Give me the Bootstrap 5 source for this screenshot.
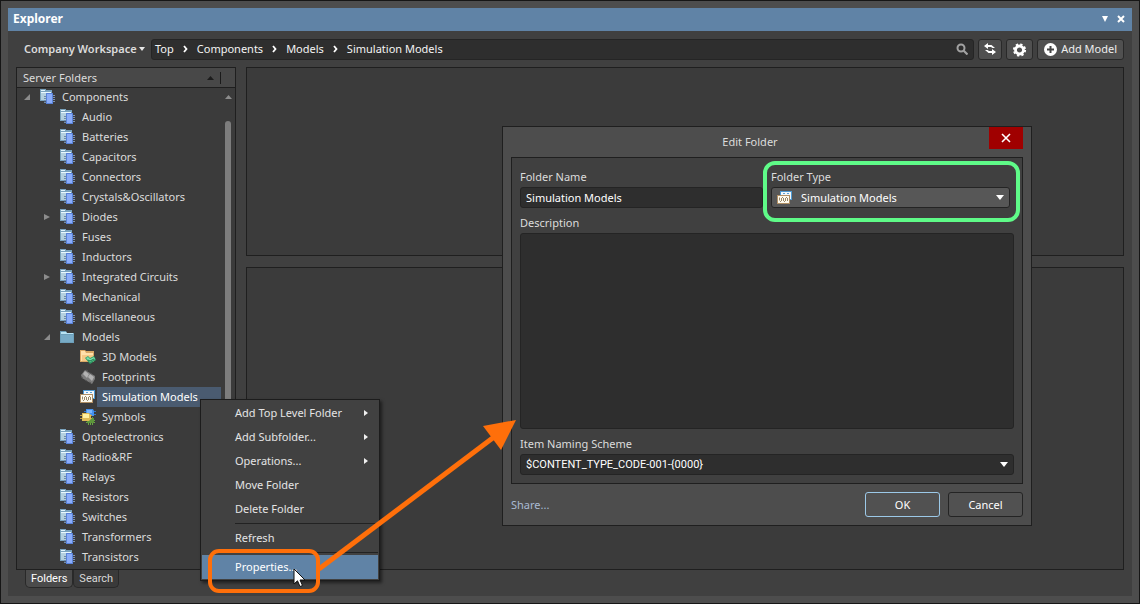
<!DOCTYPE html>
<html lang="en">
<head>
<meta charset="utf-8">
<meta name="viewport" content="width=device-width, initial-scale=1">
<title>Explorer</title>
<link href="https://cdn.jsdelivr.net/npm/bootstrap@5.3.0/dist/css/bootstrap.min.css" rel="stylesheet">
<style>
  :root { --line:#1f1f1f; --pane:#3b3b3b; --chrome:#404040; --frame:#4d4d4d; --accent:#6083a6; --field:#2e2e2e; --ink:#dcdcdc; --mark-orange:#ff6f0a; }
  body { background:var(--frame); color:var(--ink); font:11px/16px "Noto Sans","Open Sans",sans-serif; min-height:100vh; }
  a { color:inherit; text-decoration:none; }
  svg { display:block; flex:none; }
  button, input, select, textarea { font:inherit; color:#fff; }
  .app-frame { min-height:100vh; padding:7px; border:1px solid #161616; }
  .title-strip { height:23px; padding:0 7px 2px 5px; background:var(--accent); color:#fff; }
  .title-strip h1 { font-size:12px; line-height:16px; font-weight:700; margin:0; }
  .bare { background:none; border:0; padding:0; }
  .app-body { background:var(--chrome); padding:8px; }
  .tool-row { height:21px; gap:4px; margin-bottom:7px; }
  .space-btn { width:131px; padding:0 0 2px 8px; gap:2px; font-weight:600; color:var(--ink); }
  .path-box { height:21px; background:var(--field); border:1px solid #252525; border-radius:3px; padding:0 5px 1px 3px; color:#f4f4f4; }
  .path-box ol, .path-box li { gap:9px; }
  .tool-btn { height:21px; padding:0 5px 1px; background:#505050; border:1px solid #292929; border-radius:3px; color:#eee; }
  .tool-btn.wide { padding:0 6px 1px; gap:4px; }
  .tool-btn.gear { padding:0 4px; }
  .pane { background:var(--pane); border:1px solid var(--line); }
  .split { gap:10px; }
  .side { width:220px; }
  .side-head { height:20px; padding:0 14px 0 6px; border-bottom:1px solid var(--line); background:#484848; }
  .col-tick { width:1px; height:12px; background:#1a1a1a; margin-left:6px; }
  .tree, .tree ul { list-style:none; margin:0; padding:0; }
  .tree { margin-top:-1px; }
  .tree ul { padding-left:20px; }
  .tree-row { height:20px; padding-left:7px; }
  .twist { width:8px; height:8px; margin-right:8px; }
  .tree-row a { flex:1; margin-left:1px; padding:2px 0 2px 5px; white-space:nowrap; }
  .tree-row a.picked { background:#4a5b70; color:#fff; }
  .scroller { width:14px; padding-top:7px; }
  .thumb { width:6px; margin:22px 0 60px; border-radius:3px; background:#7d7d7d; }
  .side-tabs { height:18px; padding-left:9px; font:11px/14px Roboto,"Liberation Sans",sans-serif; }
  .side-tab { background:#3a3a3a; border:1px solid #292929; border-top:0; border-radius:0 0 5px 5px; padding:0 5px; color:#d8d8d8; }
  .side-tab.on { background:#4b4b4b; color:#fff; }
  .detail { margin-bottom:18px; gap:11px; }
  .detail .upper { height:189px; }

  .ctx { position:absolute; left:200px; top:399px; width:180px; padding:1px; background:#414141; border:1px solid #1c1c1c; box-shadow:2px 2px 3px rgba(0,0,0,.5); z-index:5; }
  .ctx button { display:flex; align-items:center; justify-content:space-between; width:100%; height:24px; padding:0 10px 0 33px; background:none; border:0; color:#e4e4e4; }
  .ctx button.hot { background:var(--accent); color:#fff; }
  .ctx hr { margin:2px 0 2px 33px; border-top:1px solid #222; opacity:1; }

  .dlg { position:absolute; left:502px; top:126px; width:530px; padding:0 8px 8px; background:var(--frame); border:1px solid var(--line); z-index:4; }
  .dlg-head { height:30px; }
  .dlg-head h2 { flex:1; margin:7px 0 0; text-align:center; font-size:11px; line-height:16px; font-weight:400; }
  .dlg-close { width:34px; height:22px; background:#a00000; border:0; display:grid; place-items:center; }
  .dlg-body { background:var(--chrome); border:1px solid var(--line); padding:11px 8px 8px; }
  .dlg label { display:block; height:16px; margin-bottom:2px; }
  .dlg label.next { margin-top:7px; }
  .fld { display:block; width:100%; height:21px; background-color:var(--field); border:1px solid #242424; border-radius:3px; padding:0 5px 1px; color:#fff; outline:0; appearance:none; }
  textarea.fld { height:196px; resize:none; }
  .drop { padding:1px 5px 0; background-repeat:no-repeat; background-position:right 5px center; background-image:url("data:image/svg+xml,%3Csvg xmlns='http://www.w3.org/2000/svg' width='8' height='5'%3E%3Cpath d='M0 0h8L4 5z' fill='white'/%3E%3C/svg%3E"); }
  .scheme { font-family:Roboto,"Noto Sans",sans-serif; }
  .type-col { width:239px; margin-right:4px; }
  .type-pick { background-color:#575757; padding-left:29px; }
  .type-icon { position:absolute; left:6px; top:3px; pointer-events:none; }
  .dlg-btn { width:75px; height:25px; background:#515151; border:1px solid #242424; border-radius:3px; }
  .dlg-btn.main { border-color:#9cc9e8; }
  .share { color:#a9bad3; }

  .ring { position:absolute; pointer-events:none; border:4px solid; z-index:7; }
  .ring-type { left:763px; top:161px; width:257px; height:61px; border-color:#5ffb88; border-radius:12px; }
  .ring-prop { left:208px; top:549px; width:112px; height:44px; border-color:var(--mark-orange); border-radius:11px; }
  .arrow { position:absolute; left:310px; top:410px; z-index:7; pointer-events:none; }
  .pointer { position:absolute; left:293px; top:568px; z-index:8; pointer-events:none; }
</style>
</head>
<body>
<svg width="0" height="0" class="position-absolute" aria-hidden="true">
  <symbol id="i-comp" viewBox="0 0 16 16">
    <path d="M0 0h6v1h6v11H0z" fill="#7ba3bd"/><path d="M1 1h4v1H1z" fill="#e2f4ff"/><path d="M1 3h10v8H1z" fill="#b4d0df"/><path d="M1 3h10v1H1z" fill="#e8f7ff"/>
    <path d="M4 12h2v2H4z" fill="#46566a"/>
    <path d="M4 7.500h2M4 9.500h2M4 11.500h2M4 13.500h2" stroke="#6f8ba8"/><path d="M13 6.500h2M13 8.500h2M13 10.500h2M13 12.500h2" stroke="#7d92b4"/>
    <path d="M6 4h7v11H6z" fill="#5a82d8"/><path d="M7 5h5v9H7z" fill="#8badfa"/>
  </symbol>
  <symbol id="i-folder" viewBox="0 0 16 16">
    <path d="M0 2h6l1 2h7v10H0z" fill="#6d9fb9"/><path d="M1 3h5l1 1h6v1H1z" fill="#b9e3f2"/><path d="M1 6h12v7H1z" fill="#78abc6"/>
  </symbol>
  <symbol id="i-3d" viewBox="0 0 16 16">
    <path d="M0 1h5l1 1h8v11H0z" fill="#d9a765"/><path d="M1 2h4l1 2h7v8H1z" fill="#ffe0ab"/><path d="M2 6h11v6H2z" fill="#f4c987"/>
    <path d="M5 9l3-2 2 2 4-2 2 4-6 4z" fill="#2f9c67"/><path d="M6 9l2-1 2 2 4-2 1 2-5 3z" fill="#7fe0ad"/><path d="M8 11l2 1 4-2" stroke="#1d7a4c" fill="none"/>
  </symbol>
  <symbol id="i-foot" viewBox="0 0 16 16">
    <path d="M1 6l4-5 10 6v3l-3 5L2 9z" fill="#7c7c7c"/><path d="M3 5l2-3 4 3-2 4zM8 8l2-3 4 3-2 4z" fill="#b2b2b2"/>
    <path d="M1 8l2 1M5 11l2 1M9 13l2 1M6 1l2 1M10 4l2 1" stroke="#555"/>
  </symbol>
  <symbol id="i-sim" viewBox="0 0 16 16">
    <path d="M3 1h12v9H3z" fill="#4f9ad2"/><path d="M4 2h10v7H4z" fill="#f2f8fc"/><path d="M6 3.500h2M10 3.500h2" stroke="#5ca1d2"/>
    <path d="M0 5h13v9H0z" fill="#b08f64"/><path d="M1 6h11v7H1z" fill="#fffbee"/><path d="M2.500 7.500v3M3 11.500h1M4.500 8v3M5 7.500h1M6.500 8v3M7 11.500h1M8.500 8v3M9 7.500h1M10.500 8v3" stroke="#8f7a58" stroke-width=".9" fill="none"/>
  </symbol>
  <symbol id="i-sym" viewBox="0 0 16 16">
    <path d="M4 2.500h12M4 5.500h12" stroke="#3377c8"/><path d="M6 0h7l1 2v5H6z" fill="#4590ee"/><path d="M7 1h5v3H7z" fill="#78b5ff"/>
    <path d="M6 11.500h9M6 13.500h9M8.500 10v6M10.500 10v6M12.500 8v8" stroke="#69a943"/><path d="M7 9h7v5H7z" fill="#5d963b"/>
    <path d="M0 6.500h12M0 9.500h12" stroke="#c5a044"/><path d="M2 4h7l2 2v4l-2 2H2z" fill="#dfbb55"/><path d="M3 5h6v4H3z" fill="#fff0a2"/>
  </symbol>
  <symbol id="i-open" viewBox="0 0 8 8"><path d="M6 1v6H0z" fill="#8c8c8c"/></symbol>
  <symbol id="i-shut" viewBox="0 0 8 8"><path d="M0 1l6 3-6 3z" fill="#8c8c8c"/></symbol>
  <symbol id="i-next" viewBox="0 0 5 8"><path d="M1 1l2.500 3L1 7" fill="none" stroke="#fff" stroke-width="1.800"/></symbol>
  <symbol id="i-sub" viewBox="0 0 5 8"><path d="M1 1l4 3-4 3z" fill="#f0f0f0"/></symbol>
</svg>

<div class="app-frame d-flex flex-column">
  <header class="title-strip d-flex align-items-center">
    <h1 class="me-auto">Explorer</h1>
    <button class="bare me-2" aria-label="Panel menu"><svg width="8" height="6"><path d="M1 0h6L4 6z" fill="#fff"/></svg></button>
    <button class="bare" aria-label="Close panel"><svg width="8" height="8"><path d="M1 1l6 6M7 1L1 7" stroke="#fff" stroke-width="2"/></svg></button>
  </header>

  <main class="app-body flex-grow-1 d-flex flex-column">
    <div class="tool-row d-flex align-items-center">
      <button class="bare space-btn d-flex align-items-center text-nowrap">Company Workspace<svg width="6" height="4"><path d="M0 0h6L3 4z" fill="#e6e6e6"/></svg></button>
      <nav class="path-box flex-grow-1 d-flex align-items-center" aria-label="Folder path">
        <ol class="list-unstyled d-flex m-0 me-auto">
          <li class="d-flex align-items-center"><a href="#">Top</a><svg width="5" height="8"><use href="#i-next"/></svg></li>
          <li class="d-flex align-items-center"><a href="#">Components</a><svg width="5" height="8"><use href="#i-next"/></svg></li>
          <li class="d-flex align-items-center"><a href="#">Models</a><svg width="5" height="8"><use href="#i-next"/></svg></li>
          <li><a href="#">Simulation Models</a></li>
        </ol>
        <button class="bare" aria-label="Search"><svg width="12" height="12"><circle cx="5" cy="5" r="3.500" fill="none" stroke="#a2a2a2" stroke-width="2"/><path d="M7.500 7.500l4 4" stroke="#a2a2a2" stroke-width="2.200"/></svg></button>
      </nav>
      <button class="tool-btn" aria-label="Refresh"><svg width="12" height="12" fill="#fff"><path d="M4 0v2h3.500L11 5H8.500L7 4H4v2L0 3zM8 12v-2H4.500L1 7h2.500L5 8h3V6l4 3z"/></svg></button>
      <button class="tool-btn gear" aria-label="Settings"><svg width="17" height="14" viewBox="-8.500 -7 17 14"><circle r="4" fill="none" stroke="#fff" stroke-width="2.800"/><circle r="5.600" fill="none" stroke="#fff" stroke-width="2" stroke-dasharray="2.300 2.100"/></svg></button>
      <button class="tool-btn wide d-flex align-items-center text-nowrap"><svg width="13" height="13"><circle cx="6.500" cy="6.500" r="6.500" fill="#fff"/><path d="M6.500 3v7M3 6.500h7" stroke="#444" stroke-width="2"/></svg>Add Model</button>
    </div>

    <div class="split d-flex flex-grow-1">
      <aside class="side d-flex flex-column flex-shrink-0">
        <section class="pane flex-grow-1 d-flex flex-column">
          <div class="side-head d-flex align-items-center"><span class="me-auto">Server Folders</span><svg width="7" height="4"><path d="M0 4h7L3.500 0z" fill="#1c1c1c"/></svg><span class="col-tick"></span></div>
          <div class="d-flex flex-grow-1">
            <ul class="tree flex-grow-1">
              <li><div class="tree-row d-flex align-items-center"><button class="bare twist" aria-label="Collapse Components"><svg width="8" height="8"><use href="#i-open"/></svg></button><svg width="16" height="16"><use href="#i-comp"/></svg><a href="#">Components</a></div>
                <ul>
                  <li class="tree-row d-flex align-items-center"><span class="twist"></span><svg width="16" height="16"><use href="#i-comp"/></svg><a href="#">Audio</a></li>
                  <li class="tree-row d-flex align-items-center"><span class="twist"></span><svg width="16" height="16"><use href="#i-comp"/></svg><a href="#">Batteries</a></li>
                  <li class="tree-row d-flex align-items-center"><span class="twist"></span><svg width="16" height="16"><use href="#i-comp"/></svg><a href="#">Capacitors</a></li>
                  <li class="tree-row d-flex align-items-center"><span class="twist"></span><svg width="16" height="16"><use href="#i-comp"/></svg><a href="#">Connectors</a></li>
                  <li class="tree-row d-flex align-items-center"><span class="twist"></span><svg width="16" height="16"><use href="#i-comp"/></svg><a href="#">Crystals&amp;Oscillators</a></li>
                  <li class="tree-row d-flex align-items-center"><button class="bare twist" aria-label="Expand Diodes"><svg width="8" height="8"><use href="#i-shut"/></svg></button><svg width="16" height="16"><use href="#i-comp"/></svg><a href="#">Diodes</a></li>
                  <li class="tree-row d-flex align-items-center"><span class="twist"></span><svg width="16" height="16"><use href="#i-comp"/></svg><a href="#">Fuses</a></li>
                  <li class="tree-row d-flex align-items-center"><span class="twist"></span><svg width="16" height="16"><use href="#i-comp"/></svg><a href="#">Inductors</a></li>
                  <li class="tree-row d-flex align-items-center"><button class="bare twist" aria-label="Expand Integrated Circuits"><svg width="8" height="8"><use href="#i-shut"/></svg></button><svg width="16" height="16"><use href="#i-comp"/></svg><a href="#">Integrated Circuits</a></li>
                  <li class="tree-row d-flex align-items-center"><span class="twist"></span><svg width="16" height="16"><use href="#i-comp"/></svg><a href="#">Mechanical</a></li>
                  <li class="tree-row d-flex align-items-center"><span class="twist"></span><svg width="16" height="16"><use href="#i-comp"/></svg><a href="#">Miscellaneous</a></li>
                  <li><div class="tree-row d-flex align-items-center"><button class="bare twist" aria-label="Collapse Models"><svg width="8" height="8"><use href="#i-open"/></svg></button><svg width="16" height="16"><use href="#i-folder"/></svg><a href="#">Models</a></div>
                    <ul>
                      <li class="tree-row d-flex align-items-center"><span class="twist"></span><svg width="16" height="16"><use href="#i-3d"/></svg><a href="#">3D Models</a></li>
                      <li class="tree-row d-flex align-items-center"><span class="twist"></span><svg width="16" height="16"><use href="#i-foot"/></svg><a href="#">Footprints</a></li>
                      <li class="tree-row d-flex align-items-center"><span class="twist"></span><svg width="16" height="16"><use href="#i-sim"/></svg><a href="#" class="picked" aria-current="true">Simulation Models</a></li>
                      <li class="tree-row d-flex align-items-center"><span class="twist"></span><svg width="16" height="16"><use href="#i-sym"/></svg><a href="#">Symbols</a></li>
                    </ul>
                  </li>
                  <li class="tree-row d-flex align-items-center"><span class="twist"></span><svg width="16" height="16"><use href="#i-comp"/></svg><a href="#">Optoelectronics</a></li>
                  <li class="tree-row d-flex align-items-center"><span class="twist"></span><svg width="16" height="16"><use href="#i-comp"/></svg><a href="#">Radio&amp;RF</a></li>
                  <li class="tree-row d-flex align-items-center"><span class="twist"></span><svg width="16" height="16"><use href="#i-comp"/></svg><a href="#">Relays</a></li>
                  <li class="tree-row d-flex align-items-center"><span class="twist"></span><svg width="16" height="16"><use href="#i-comp"/></svg><a href="#">Resistors</a></li>
                  <li class="tree-row d-flex align-items-center"><span class="twist"></span><svg width="16" height="16"><use href="#i-comp"/></svg><a href="#">Switches</a></li>
                  <li class="tree-row d-flex align-items-center"><span class="twist"></span><svg width="16" height="16"><use href="#i-comp"/></svg><a href="#">Transformers</a></li>
                  <li class="tree-row d-flex align-items-center"><span class="twist"></span><svg width="16" height="16"><use href="#i-comp"/></svg><a href="#">Transistors</a></li>
                </ul>
              </li>
            </ul>
            <div class="scroller d-flex flex-column align-items-center"><svg width="7" height="4"><path d="M0 4h7L3.500 0z" fill="#8c8c8c"/></svg><div class="thumb flex-grow-1"></div></div>
          </div>
        </section>
        <div class="side-tabs d-flex"><button class="side-tab on">Folders</button><button class="side-tab">Search</button></div>
      </aside>
      <div class="detail flex-grow-1 d-flex flex-column">
        <section class="pane upper" aria-label="Items"></section>
        <section class="pane flex-grow-1" aria-label="Item details"></section>
      </div>
    </div>
  </main>
</div>

<div class="ctx" role="menu">
  <button role="menuitem">Add Top Level Folder<svg width="5" height="8"><use href="#i-sub"/></svg></button>
  <button role="menuitem">Add Subfolder...<svg width="5" height="8"><use href="#i-sub"/></svg></button>
  <button role="menuitem">Operations...<svg width="5" height="8"><use href="#i-sub"/></svg></button>
  <button role="menuitem">Move Folder</button>
  <button role="menuitem">Delete Folder</button>
  <hr>
  <button role="menuitem">Refresh</button>
  <hr>
  <button role="menuitem" class="hot">Properties...</button>
</div>

<form class="dlg" role="dialog" aria-labelledby="dlg-title">
  <div class="dlg-head d-flex align-items-start">
    <h2 id="dlg-title">Edit Folder</h2>
    <button type="button" class="dlg-close" aria-label="Close"><svg width="10" height="10"><path d="M1 1l8 8M9 1L1 9" stroke="#fff" stroke-width="1.600"/></svg></button>
  </div>
  <div class="dlg-body">
    <div class="d-flex gap-2">
      <div class="flex-grow-1"><label for="f-name">Folder Name</label><input id="f-name" class="fld" value="Simulation Models"></div>
      <div class="type-col"><label for="f-type">Folder Type</label>
        <div class="position-relative"><select id="f-type" class="fld drop type-pick"><option>Simulation Models</option></select><svg class="type-icon" width="16" height="16"><use href="#i-sim"/></svg></div>
      </div>
    </div>
    <label for="f-desc" class="next">Description</label>
    <textarea id="f-desc" class="fld"></textarea>
    <label for="f-scheme" class="next">Item Naming Scheme</label>
    <select id="f-scheme" class="fld drop scheme"><option>$CONTENT_TYPE_CODE-001-{0000}</option></select>
  </div>
  <div class="d-flex align-items-center gap-2 mt-2">
    <a href="#" class="share me-auto">Share...</a>
    <button type="button" class="dlg-btn main">OK</button>
    <button type="button" class="dlg-btn">Cancel</button>
  </div>
</form>

<div class="ring ring-type"></div>
<div class="ring ring-prop"></div>
<svg class="arrow" width="210" height="165"><path d="M9 159L184 27" stroke="#ff6f0a" stroke-width="5"/><path d="M206 10L191 40L173 16z" fill="#ff6f0a"/></svg>
<svg class="pointer" width="13" height="20"><path d="M1 1v15l3.500-3.200L7 18.500l2.500-1L7 12h5z" fill="#fff" stroke="#111"/></svg>
<script src="https://cdn.jsdelivr.net/npm/bootstrap@5.3.0/dist/js/bootstrap.bundle.min.js"></script>
</body>
</html>
